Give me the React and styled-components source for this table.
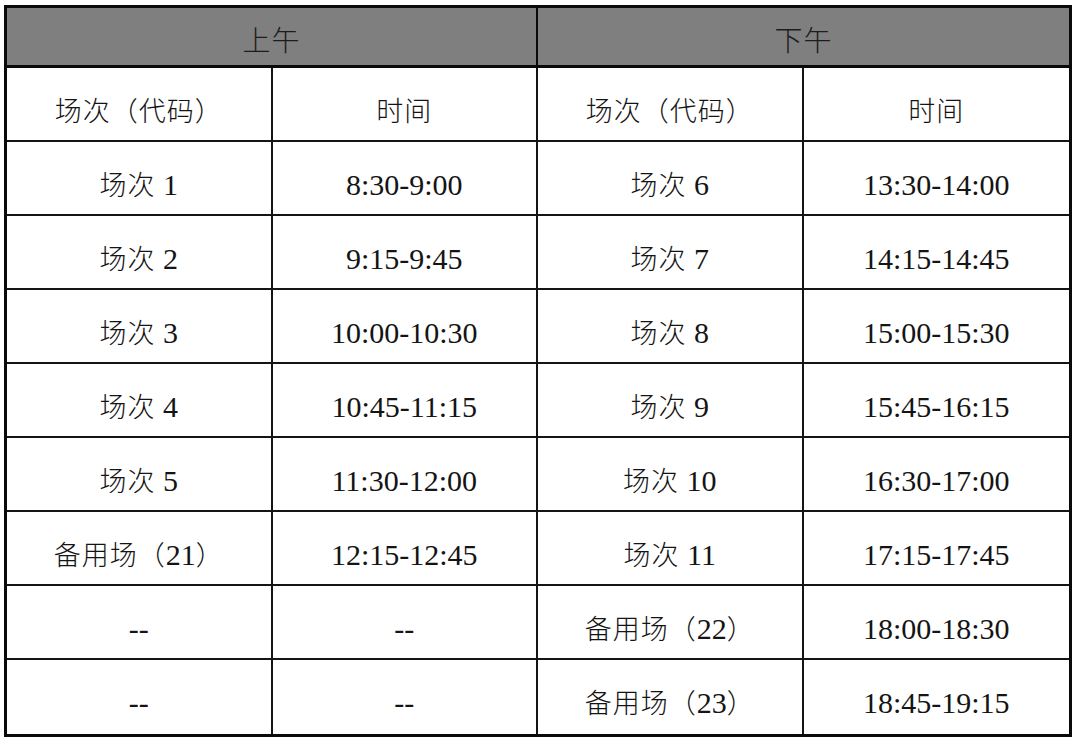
import React from 'react';
import styled, { createGlobalStyle } from 'styled-components';

const GlobalStyle = createGlobalStyle`
  html, body {
    margin: 0;
    padding: 0;
    background: #ffffff;
  }

  body {
    padding: 5px 0 0 4px;
    font-family: "Liberation Serif", "Noto Sans CJK SC", serif;
    color: #141414;
  }
`;

const Sheet = styled.div`
  box-sizing: border-box;
  width: 1068px;
  display: grid;
  grid-template-columns: repeat(4, 1fr);
  grid-template-rows: 60px repeat(9, 74px);
  border: 3px solid #0a0a0a;
`;

const HeadCell = styled.div`
  box-sizing: border-box;
  grid-column: span 2;
  display: flex;
  align-items: center;
  justify-content: center;
  padding-top: 4px;
  background: #7f7f7f;
  border-bottom: 3px solid #0a0a0a;
  border-right: ${props => (props.$last ? 'none' : '2px solid #0a0a0a')};
  font-size: 28px;
  font-weight: 300;
  color: #1c1c1c;
  letter-spacing: 1px;
`;

const Cell = styled.div`
  box-sizing: border-box;
  display: flex;
  align-items: baseline;
  justify-content: center;
  padding-top: 28px;
  border-right: ${props => (props.$lastCol ? 'none' : '2px solid #141414')};
  border-bottom: ${props => (props.$lastRow ? 'none' : '2px solid #141414')};
  white-space: pre;
  line-height: 1;
`;

const Han = styled.span`
  font-family: "Noto Sans CJK SC", sans-serif;
  font-size: 27px;
  font-weight: 300;
  letter-spacing: 1px;
`;

const Num = styled.span`
  font-family: "Liberation Serif", serif;
  font-size: 30px;
`;

const rows = [
  ['场次（代码）', '时间', '场次（代码）', '时间'],
  ['场次 1', '8:30-9:00', '场次 6', '13:30-14:00'],
  ['场次 2', '9:15-9:45', '场次 7', '14:15-14:45'],
  ['场次 3', '10:00-10:30', '场次 8', '15:00-15:30'],
  ['场次 4', '10:45-11:15', '场次 9', '15:45-16:15'],
  ['场次 5', '11:30-12:00', '场次 10', '16:30-17:00'],
  ['备用场（21）', '12:15-12:45', '场次 11', '17:15-17:45'],
  ['--', '--', '备用场（22）', '18:00-18:30'],
  ['--', '--', '备用场（23）', '18:45-19:15']
];

// split a label into Chinese runs and Latin/digit runs so each gets its own face
const Label = ({ text }) =>
  text
    .split(/([\u3000-\u9fff\uff00-\uffef]+)/)
    .filter(Boolean)
    .map((part, i) =>
      /[\u3000-\u9fff\uff00-\uffef]/.test(part) ? (
        <Han key={i}>{part}</Han>
      ) : (
        <Num key={i}>{part}</Num>
      )
    );

export default function App() {
  return (
    <>
      <GlobalStyle />
      <Sheet>
        <HeadCell>上午</HeadCell>
        <HeadCell $last>下午</HeadCell>
        {rows.map((row, r) =>
          row.map((text, c) => (
            <Cell
              key={`${r}-${c}`}
              $lastCol={c === 3}
              $lastRow={r === rows.length - 1}
            >
              <Label text={text} />
            </Cell>
          ))
        )}
      </Sheet>
    </>
  );
}
